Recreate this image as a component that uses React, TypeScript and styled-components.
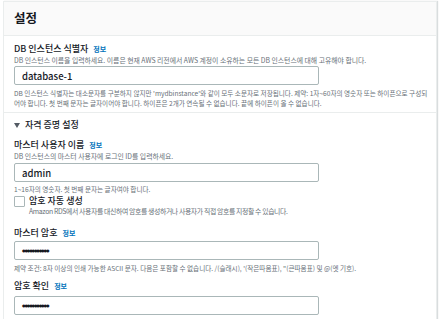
import React from 'react';
import styled, { createGlobalStyle } from 'styled-components';

const GlobalStyle = createGlobalStyle`
  html, body {
    margin: 0;
    padding: 0;
    background: #ffffff;
  }
  body {
    font-family: "Noto Sans CJK KR", "Noto Sans", "Liberation Sans", sans-serif;
    color: #16191f;
  }
`;

const Page = styled.div`
  padding: 1px 3px 0 3px;
  width: 434px;
`;

const Panel = styled.div`
  border: 1px solid #eaeded;
  border-bottom: none;
  background: #ffffff;
  height: 317px;
  overflow: hidden;
  box-shadow: 1px 0 1px rgba(0, 28, 36, 0.15);
`;

const Header = styled.div`
  background: #fafafa;
  border-bottom: 1px solid #eaeded;
  height: 33px;
  display: flex;
  align-items: center;
  padding-left: 10px;
`;

const Title = styled.h2`
  margin: 0;
  font-size: 12.5px;
  font-weight: 700;
  line-height: 1;
`;

const Section = styled.div<{ $top: number; $bottom?: number; $divided?: boolean }>`
  padding: ${(p) => p.$top}px 10px ${(p) => p.$bottom ?? 0}px 10px;
  border-bottom: ${(p) => (p.$divided ? '1px solid #eaeded' : 'none')};
`;

const Field = styled.div<{ $gap?: number }>`
  display: flex;
  flex-direction: column;
  margin-top: ${(p) => p.$gap ?? 0}px;
`;

const LabelRow = styled.div`
  display: flex;
  align-items: baseline;
  gap: 5px;
  font-size: 9px;
  font-weight: 500;
  line-height: 11px;
  white-space: nowrap;
`;

const InfoLink = styled.a`
  color: #0073bb;
  font-size: 7px;
  font-weight: 700;
  text-decoration: none;
`;

const Desc = styled.div<{ $tight?: number }>`
  color: #687078;
  font-size: 6.85px;
  line-height: 10px;
  white-space: nowrap;
  letter-spacing: ${(p) => p.$tight ?? 0}px;
`;

const Hint = styled.div<{ $gap?: number }>`
  color: #687078;
  font-size: 6.6px;
  line-height: 10px;
  margin-top: ${(p) => p.$gap ?? 3}px;
  white-space: nowrap;
`;

const Input = styled.div<{ $gap?: number }>`
  margin-top: ${(p) => p.$gap ?? 1}px;
  width: 305px;
  height: 19px;
  box-sizing: border-box;
  border: 1px solid #aab7b8;
  border-radius: 2px;
  display: flex;
  align-items: center;
  padding-left: 7px;
  font-size: 9.5px;
  font-weight: 500;
  color: #16191f;
`;

const Dots = styled.span`
  font-size: 4px;
  letter-spacing: -1.1px;
  font-family: "DejaVu Sans", sans-serif;
  color: #16191f;
`;

const Expander = styled.div`
  display: flex;
  align-items: center;
  gap: 5px;
  font-size: 9px;
  font-weight: 500;
  line-height: 12px;
  margin-bottom: 8px;
`;

const Caret = styled.span`
  width: 0;
  height: 0;
  border-left: 3px solid transparent;
  border-right: 3px solid transparent;
  border-top: 5px solid #545b64;
`;

const CheckRow = styled.div`
  display: flex;
  gap: 4px;
  margin-top: 1px;
`;

const Box = styled.span`
  width: 9px;
  height: 9px;
  border: 1px solid #aab7b8;
  border-radius: 1px;
  margin-top: 1px;
  flex-shrink: 0;
`;

const CheckText = styled.div`
  display: flex;
  flex-direction: column;
`;

const CheckLabel = styled.div`
  font-size: 9px;
  font-weight: 500;
  line-height: 11px;
`;

const PASSWORD_DOTS = '●●●●●●●●●●●';

export default function App() {
  return (
    <>
      <GlobalStyle />
      <Page>
        <Panel>
          <Header>
            <Title>설정</Title>
          </Header>

          <Section $top={7} $bottom={4} $divided>
            <Field>
              <LabelRow>
                DB 인스턴스 식별자 <InfoLink>정보</InfoLink>
              </LabelRow>
              <Desc>DB 인스턴스 이름을 입력하세요. 이름은 현재 AWS 리전에서 AWS 계정이 소유하는 모든 DB 인스턴스에 대해 고유해야 합니다.</Desc>
              <Input>database-1</Input>
              <Hint>
                DB 인스턴스 식별자는 대소문자를 구분하지 않지만 'mydbinstance'와 같이 모두 소문자로 저장됩니다. 제약: 1자~60자의 영숫자 또는 하이픈으로 구성되
                <br />
                어야 합니다. 첫 번째 문자는 글자이어야 합니다. 하이픈은 2개가 연속될 수 없습니다. 끝에 하이픈이 올 수 없습니다.
              </Hint>
            </Field>
          </Section>

          <Section $top={6}>
            <Expander>
              <Caret />
              자격 증명 설정
            </Expander>

            <Field>
              <LabelRow>
                마스터 사용자 이름 <InfoLink>정보</InfoLink>
              </LabelRow>
              <Desc>DB 인스턴스의 마스터 사용자에 로그인 ID를 입력하세요.</Desc>
              <Input $gap={2}>admin</Input>
              <Hint $gap={2}>1~16자의 영숫자. 첫 번째 문자는 글자여야 합니다.</Hint>
            </Field>

            <CheckRow>
              <Box />
              <CheckText>
                <CheckLabel>암호 자동 생성</CheckLabel>
                <Desc $tight={-0.35}>Amazon RDS에서 사용자를 대신하여 암호를 생성하거나 사용자가 직접 암호를 지정할 수 있습니다.</Desc>
              </CheckText>
            </CheckRow>

            <Field $gap={11}>
              <LabelRow>
                마스터 암호 <InfoLink>정보</InfoLink>
              </LabelRow>
              <Input $gap={2}>
                <Dots>{PASSWORD_DOTS}</Dots>
              </Input>
              <Hint>제약 조건: 8자 이상의 인쇄 가능한 ASCII 문자. 다음은 포함할 수 없습니다. /(슬래시), '(작은따옴표), "(큰따옴표) 및 @(엣 기호).</Hint>
            </Field>

            <Field $gap={7}>
              <LabelRow>
                암호 확인 <InfoLink>정보</InfoLink>
              </LabelRow>
              <Input $gap={4}>
                <Dots>{PASSWORD_DOTS}</Dots>
              </Input>
            </Field>
          </Section>
        </Panel>
      </Page>
    </>
  );
}
